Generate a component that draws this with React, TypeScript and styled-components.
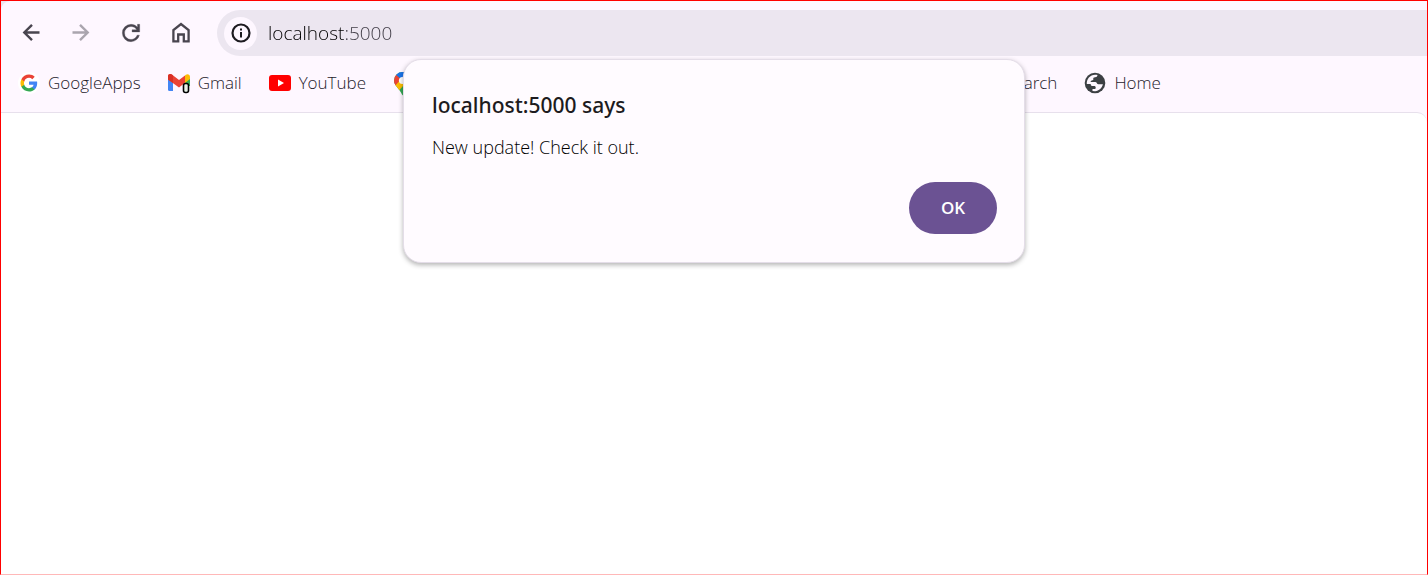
import React from "react";
import styled, { createGlobalStyle } from "styled-components";

const GlobalStyle = createGlobalStyle`
  *, *::before, *::after { box-sizing: border-box; }
  body {
    margin: 0;
    font-family: "Open Sans", "Noto Sans", sans-serif;
    color: #1d1b20;
    background: #ffffff;
  }
`;

const Window = styled.div`
  position: relative;
  display: flex;
  flex-direction: column;
  min-height: 100vh;
  overflow: hidden;
  border: 1px solid #ff0000;
  border-bottom-color: #ffb8b8;
  background: #ece6f0;
`;

const Chrome = styled.header`
  background: #fef7ff;
  border-top-left-radius: 9px;
`;

const Toolbar = styled.div`
  display: flex;
  align-items: center;
  gap: 22px;
  padding: 9px 0 0 16px;
`;

const NavButton = styled.button`
  display: flex;
  align-items: center;
  justify-content: center;
  flex: none;
  width: 28px;
  height: 28px;
  padding: 0;
  border: 0;
  background: none;
  color: #49454f;

  &:disabled {
    color: #aaa5ae;
  }
`;

const AddressBar = styled.div`
  display: flex;
  align-items: center;
  flex: 1;
  gap: 11px;
  height: 46px;
  padding-left: 7px;
  border-radius: 23px 0 0 23px;
  background: #ece6f0;
`;

const SiteInfoButton = styled.button`
  display: flex;
  align-items: center;
  justify-content: center;
  flex: none;
  width: 33px;
  height: 33px;
  padding: 0;
  border: 0;
  border-radius: 50%;
  background: #fef7ff;
  color: #1d1b20;
`;

const AddressInput = styled.input`
  flex: 1;
  min-width: 0;
  padding: 0;
  border: 0;
  outline: 0;
  font: 300 19px/26px "Open Sans", "Noto Sans", sans-serif;
  color: transparent;
  background: linear-gradient(to right, #000000 77px, #3c3842 77px);
  background-clip: text;
`;

const Bookmarks = styled.nav`
  display: flex;
  align-items: center;
  gap: 27px;
  height: 56px;
  padding: 0 17px 2px;
`;

const Bookmark = styled.a<{ $width?: number }>`
  display: flex;
  align-items: center;
  flex: none;
  gap: 8px;
  width: ${(p) => (p.$width ? `${p.$width}px` : "auto")};
  font-size: 17px;
  font-weight: 300;
  line-height: 24px;
  color: #25212b;
  text-decoration: none;
  white-space: nowrap;
`;

const Page = styled.main`
  flex: 1;
  border-top: 1px solid #e7e0ec;
  border-top-right-radius: 10px;
  background: #ffffff;
`;

const PageBacking = styled.div`
  display: flex;
  flex: 1;
  background: #fef7ff;
`;

const Alert = styled.dialog`
  position: absolute;
  top: 58px;
  left: 0;
  right: 0;
  display: flex;
  flex-direction: column;
  width: 622px;
  max-width: 100%;
  margin: 0 auto;
  padding: 30px 27px 28px 28px;
  border: 1px solid #e4dde8;
  border-radius: 18px;
  background: #fffbff;
  color: #1d1b20;
  box-shadow: 0 2px 5px rgba(0, 0, 0, 0.3);
`;

const AlertTitle = styled.h1`
  margin: 0;
  font-family: "Noto Sans", "Open Sans", sans-serif;
  font-size: 21px;
  line-height: 30px;
  font-weight: 500;
`;

const AlertMessage = styled.p`
  margin: 15px 0 23px;
  font-size: 18px;
  font-weight: 300;
  line-height: 24px;
  color: #000000;
`;

const OkButton = styled.button`
  align-self: flex-end;
  width: 88px;
  height: 52px;
  padding: 0;
  border: 0;
  border-radius: 26px;
  background: #6b5293;
  color: #ffffff;
  font: 600 17px/24px "Open Sans", "Noto Sans", sans-serif;
`;

const BackIcon = () => (
  <svg width="24" height="24" viewBox="0 0 24 24" fill="none" stroke="currentColor" strokeWidth="2.4">
    <path d="M20.500 11.500H5.500M13 3.800l-7.700 7.700 7.700 7.700" />
  </svg>
);

const ForwardIcon = () => (
  <svg width="24" height="24" viewBox="0 0 24 24" fill="none" stroke="currentColor" strokeWidth="2.4">
    <path d="M3.500 11.500h15M11 3.800l7.700 7.700-7.700 7.700" />
  </svg>
);

const ReloadIcon = () => (
  <svg width="26" height="26" viewBox="0 0 24 24" fill="currentColor" stroke="currentColor" strokeWidth=".3">
    <path d="M12 20q-3.350 0-5.675-2.325T4 12q0-3.350 2.325-5.675T12 4q1.725 0 3.300.713T18 6.750V4h2v7h-7V9h4.200q-.8-1.400-2.188-2.200T12 6Q9.500 6 7.750 7.750T6 12q0 2.500 1.750 4.250T12 18q1.925 0 3.475-1.100T17.650 14h2.100q-.7 2.650-2.850 4.325T12 20Z" />
  </svg>
);

const HomeIcon = () => (
  <svg width="26" height="26" viewBox="0 0 26 26" fill="none" stroke="currentColor" strokeWidth="2.300">
    <path d="M5.400 21.300V10L13 4l7.600 6v11.300h-4.800v-6.800h-5.600v6.800Z" />
  </svg>
);

const InfoIcon = () => (
  <svg width="20" height="20" viewBox="0 0 20 20">
    <circle cx="10" cy="10" r="8.500" fill="none" stroke="currentColor" strokeWidth="2.200" />
    <path d="M9 9h2v5.500H9zM9 5.500h2v2H9z" fill="currentColor" />
  </svg>
);

const GoogleIcon = () => (
  <svg width="22" height="22" viewBox="0 0 22 22">
    <circle cx="11" cy="11" r="11" fill="#fff" />
    <g transform="translate(2.500 2.500) scale(.71)">
      <path fill="#4285F4" d="M23.500 12.270c0-.79-.07-1.540-.19-2.270H12v4.510h6.470c-.29 1.480-1.140 2.730-2.400 3.580v3h3.860c2.260-2.090 3.570-5.170 3.570-8.820Z" />
      <path fill="#34A853" d="M12 24c3.240 0 5.950-1.080 7.930-2.910l-3.860-3c-1.080.72-2.450 1.160-4.070 1.160-3.130 0-5.780-2.110-6.730-4.960H1.290v3.090C3.260 21.300 7.310 24 12 24Z" />
      <path fill="#FBBC05" d="M5.270 14.290c-.25-.72-.38-1.490-.38-2.290s.14-1.570.38-2.290V6.620H1.290a11.900 11.900 0 0 0 0 10.760l3.980-3.090Z" />
      <path fill="#EA4335" d="M12 4.750c1.770 0 3.350.61 4.600 1.800l3.420-3.420C17.950 1.190 15.240 0 12 0 7.310 0 3.260 2.700 1.290 6.620l3.980 3.090C6.220 6.860 8.870 4.750 12 4.750Z" />
    </g>
  </svg>
);

const GmailIcon = () => (
  <svg width="22" height="22" viewBox="0 0 22 22">
    <path fill="#4285F4" d="M0 5l5 3.500V19H1.500A1.500 1.500 0 0 1 0 17.500Z" />
    <path fill="#34A853" d="M17 8.500L22 5v9h-5Z" />
    <path fill="#EA4335" d="M0 4.500C0 2 2.600 1.500 4.200 2.800L11 8l6-4.500v7.300L11 15.600 0 7.500Z" />
    <path fill="#D93025" d="M0 4.500C0 2 2.600 1.500 4.200 2.800L5 3.500v7.600L0 7.500Z" />
    <path fill="#FBBC04" d="M17 3.500l.8-.7C19.600 1.500 22 2.300 22 5v2l-5 4Z" />
    <rect x="15.500" y="11.500" width="5" height="9" rx="2" fill="#e8f3e8" stroke="#000" strokeWidth="1.600" />
  </svg>
);

const YouTubeIcon = () => (
  <svg width="22" height="22" viewBox="0 0 22 22">
    <rect y="3" width="22" height="16" rx="3" fill="#ff0000" />
    <path d="M9 7.500v7l6-3.500Z" fill="#fff" />
  </svg>
);

const MapsIcon = () => (
  <svg width="18" height="26" viewBox="0 0 18 26">
    <defs>
      <clipPath id="pin">
        <path d="M9.500 2A8.500 8.500 0 0 0 1 10.500c0 5.500 5 7 8.500 15 3.500-8 8.500-9.500 8.500-15A8.500 8.500 0 0 0 9.500 2Z" />
      </clipPath>
    </defs>
    <g clipPath="url(#pin)">
      <rect width="18" height="26" fill="#34A853" />
      <path d="M1 16L8 8l10-1L6 20.500Z" fill="#FBBC04" />
      <path d="M0 4.500h3l5 4.500-6.500 7.500H0Z" fill="#EA4335" />
      <path d="M3 4.800L8 9l6-9H3Z" fill="#1A73E8" />
      <path d="M13 1L8 8l4 3 6-4V1Z" fill="#4285F4" />
    </g>
    <circle cx="9.500" cy="10.500" r="3.600" fill="#fff" />
  </svg>
);

const GlobeIcon = () => (
  <svg width="22" height="22" viewBox="0 0 22 22">
    <circle cx="11" cy="11" r="10.300" fill="#3c4043" />
    <path
      d="M13.500 3.100c-.2 1.500-1 2.200-2.400 2.200-1.600 0-2 .7-1.800 1.700.2 1-.4 1.400-1.500 1.500-1 .1-1.200.7-1.100 1.500h4.500c1.900 0 1.600 2.300 3.200 2.300h4.500c-.7 3.700-3.900 6.700-7.800 6.900l-2.600-.3v-1.800h1.700c1.200 0 1.500-.6 1.500-1.600 0-1-.6-1.500-1.600-1.500H8.300c-1.300 0-1.600-.7-1.600-2H2.800c-.3-4.800 3.300-9.100 8.300-9.200.9 0 1.700.1 2.400.3Z"
      fill="#fef7ff"
    />
  </svg>
);

export default function App() {
  return (
    <>
      <GlobalStyle />
      <Window>
        <Chrome>
          <Toolbar>
            <NavButton aria-label="Back"><BackIcon /></NavButton>
            <NavButton aria-label="Forward" disabled><ForwardIcon /></NavButton>
            <NavButton aria-label="Reload"><ReloadIcon /></NavButton>
            <NavButton aria-label="Home page"><HomeIcon /></NavButton>
            <AddressBar>
              <SiteInfoButton aria-label="View site information"><InfoIcon /></SiteInfoButton>
              <AddressInput aria-label="Address" defaultValue="localhost:5000" />
            </AddressBar>
          </Toolbar>
          <Bookmarks aria-label="Bookmarks">
            <Bookmark href="#apps"><GoogleIcon />GoogleApps</Bookmark>
            <Bookmark href="#gmail"><GmailIcon />Gmail</Bookmark>
            <Bookmark href="#youtube"><YouTubeIcon />YouTube</Bookmark>
            <Bookmark href="#maps" aria-label="Maps" $width={585}><MapsIcon /></Bookmark>
            <Bookmark href="#search">Search</Bookmark>
            <Bookmark href="#home"><GlobeIcon />Home</Bookmark>
          </Bookmarks>
        </Chrome>
        <PageBacking>
          <Page />
        </PageBacking>
        <Alert open aria-labelledby="alert-title">
          <AlertTitle id="alert-title">localhost:5000 says</AlertTitle>
          <AlertMessage>New update! Check it out.</AlertMessage>
          <OkButton>OK</OkButton>
        </Alert>
      </Window>
    </>
  );
}
